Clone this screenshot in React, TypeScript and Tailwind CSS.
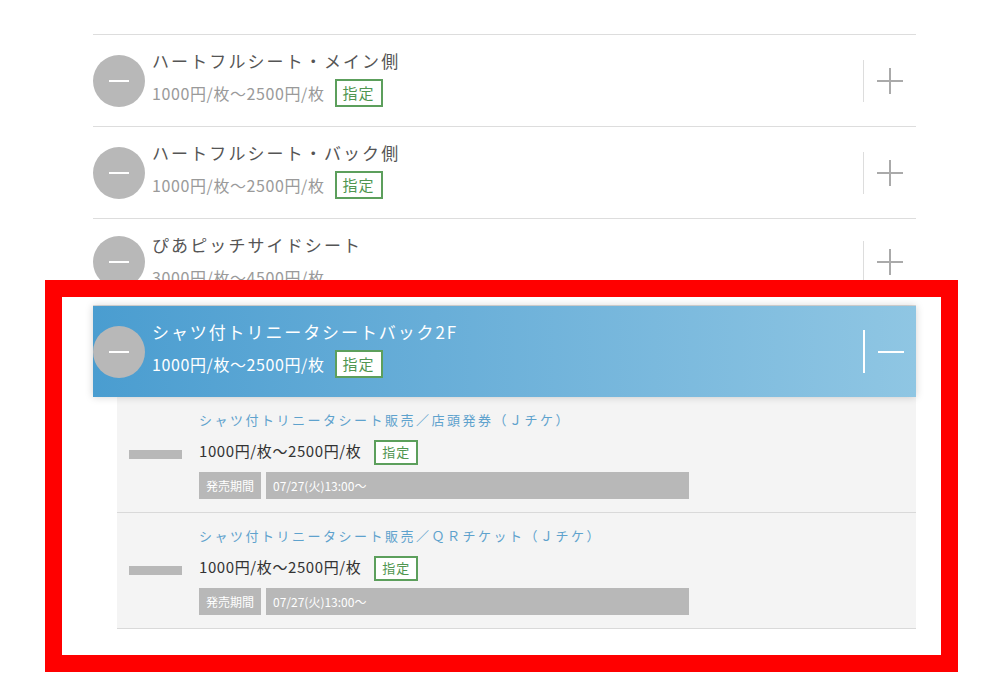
const seats = [
  { name: 'ハートフルシート・メイン側', price: '1000円/枚～2500円/枚', reserved: true },
  { name: 'ハートフルシート・バック側', price: '1000円/枚～2500円/枚', reserved: true },
  { name: 'ぴあピッチサイドシート', price: '3000円/枚～4500円/枚', reserved: false },
];

const sales = [
  { title: 'シャツ付トリニータシート販売／店頭発券（Ｊチケ）', price: '1000円/枚～2500円/枚', period: '07/27(火)13:00～' },
  { title: 'シャツ付トリニータシート販売／ＱＲチケット（Ｊチケ）', price: '1000円/枚～2500円/枚', period: '07/27(火)13:00～' },
];

const font = { fontFamily: '"Noto Sans CJK JP", "Noto Sans", sans-serif' };

function Knob() {
  return (
    <div className="w-[52px] h-[52px] shrink-0 rounded-full bg-[#b8b8b8] flex items-center justify-center">
      <span className="block w-[20px] h-[2px] bg-white" />
    </div>
  );
}

function Badge({ small, white }: { small?: boolean; white?: boolean }) {
  return (
    <span
      className={`inline-flex items-center justify-center border-2 border-[#5c9f5c] text-[#4f9650] tracking-[1px] ${
        white ? 'bg-white' : ''
      } ${small ? 'w-[44px] h-[25px] text-[13px]' : 'w-[48px] h-[28px] text-[15px]'}`}
    >
      指定
    </span>
  );
}

function SeatRow({ name, price, reserved, h }: { name: string; price: string; reserved: boolean; h: string }) {
  return (
    <div className={`flex items-center border-b border-[#dddddd] ${h}`}>
      <Knob />
      <div className="ml-[7px] self-start pt-[14px]">
        <div className="text-[17px] leading-[24px] tracking-[2.1px] text-[#555]">{name}</div>
        <div className="mt-[6px] flex items-center h-[28px]">
          <span className="text-[16px] tracking-[0.6px] text-[#9a9a9a]">{price}</span>
          {reserved && (
            <span className="ml-[10px]">
              <Badge />
            </span>
          )}
        </div>
      </div>
      <div className="ml-auto flex items-center">
        <span className="block w-px h-[42px] bg-[#dddddd]" />
        <div className="w-[52px] h-[52px] relative flex items-center justify-center">
          <span className="block w-[26px] h-[2px] bg-[#aaaaaa]" />
          <span className="absolute block w-[2px] h-[26px] bg-[#aaaaaa]" />
        </div>
      </div>
    </div>
  );
}

export default function App() {
  return (
    <div className="relative w-[1004px] h-[683px] bg-white overflow-hidden" style={font}>
      <div className="ml-[93px] w-[823px] pt-[34px]">
        <div className="border-t border-[#dddddd]">
          <SeatRow {...seats[0]} h="h-[92px]" />
          <SeatRow {...seats[1]} h="h-[92px]" />
          <SeatRow {...seats[2]} h="h-[87px]" />
        </div>

        {/* open section */}
        <div className="flex items-center h-[91px] bg-linear-to-r from-[#4a9dd0] to-[#8fc6e3] shadow-[0_0_8px_rgba(0,0,0,0.18)] relative">
          <Knob />
          <div className="ml-[7px] self-start pt-[14px]">
            <div className="text-[17px] leading-[24px] tracking-[1.9px] text-white">シャツ付トリニータシートバック2F</div>
            <div className="mt-[6px] flex items-center h-[28px]">
              <span className="text-[16px] tracking-[0.6px] text-white">1000円/枚～2500円/枚</span>
              <span className="ml-[10px]">
                <Badge white />
              </span>
            </div>
          </div>
          <div className="ml-auto flex items-center">
            <span className="block w-[2px] h-[43px] bg-white" />
            <div className="w-[51px] h-[52px] flex items-center justify-center">
              <span className="block w-[26px] h-[2px] bg-white" />
            </div>
          </div>
        </div>

        <div className="ml-[24px]">
          {sales.map((s) => (
            <div key={s.title} className="flex items-center bg-[#f4f4f4] border-b border-[#d9d9d9] pt-[12px] pb-[13px] pl-[12px]">
              <span className="block w-[53px] h-[9px] bg-[#b8b8b8] shrink-0" />
              <div className="ml-[17px]">
                <div className="text-[13px] leading-[22px] tracking-[2.5px] text-[#5ea2cd]">{s.title}</div>
                <div className="mt-[8px] flex items-center h-[25px]">
                  <span className="text-[15px] tracking-[0.6px] text-[#333]">{s.price}</span>
                  <span className="ml-[13px]">
                    <Badge small white />
                  </span>
                </div>
                <div className="mt-[8px] flex h-[27px] text-[12px] text-white">
                  <span className="w-[62px] bg-[#b8b8b8] flex items-center justify-center">発売期間</span>
                  <span className="ml-[5px] w-[423px] bg-[#b8b8b8] flex items-center pl-[7px]">{s.period}</span>
                </div>
              </div>
            </div>
          ))}
        </div>
      </div>

      {/* highlight frame */}
      <div className="absolute left-[45px] top-[280px] w-[913px] h-[392px] border-[17px] border-[#ff0000] pointer-events-none" />
    </div>
  );
}
